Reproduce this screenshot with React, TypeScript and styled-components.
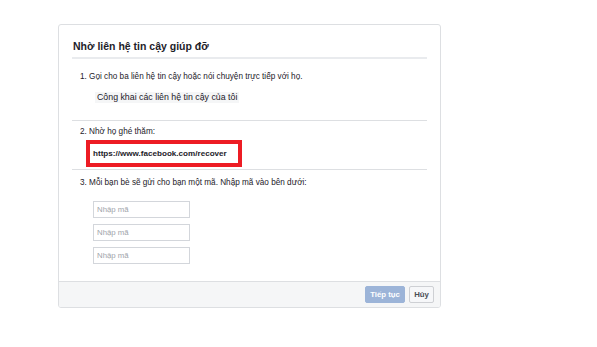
import React from 'react'
import styled, { createGlobalStyle } from 'styled-components'

const GlobalStyle = createGlobalStyle`
  html, body {
    margin: 0;
    padding: 0;
    background: #fff;
    font-family: "Liberation Sans", Arial, sans-serif;
    color: #1d2129;
  }
`

const Page = styled.div`
  width: 597px;
  height: 347px;
  padding: 24px 0 0 58px;
  box-sizing: border-box;
`

const Card = styled.div`
  width: 383px;
  height: 284px;
  box-sizing: border-box;
  border: 1px solid #dddfe2;
  border-radius: 3px;
  display: flex;
  flex-direction: column;
  overflow: hidden;
`

const Header = styled.div`
  margin: 0 13px;
  padding: 15px 0 5px 1px;
  border-bottom: 2px solid #e9ebee;
  font-size: 10.5px;
  font-weight: bold;
  line-height: 12px;
  white-space: nowrap;
`

const Section = styled.div<{ $top: number; $bottom: number; $last?: boolean }>`
  margin: 0 13px;
  padding: ${p => p.$top}px 0 ${p => p.$bottom}px 8px;
  border-bottom: ${p => (p.$last ? 'none' : '1px solid #dddfe2')};
  flex: ${p => (p.$last ? 1 : 'none')};
`

const StepText = styled.div`
  font-size: 8.2px;
  line-height: 12px;
  color: #1d2129;
  white-space: nowrap;
`

const GrayButton = styled.div`
  display: inline-block;
  margin: 9px 0 0 15px;
  padding: 0 2px;
  height: 11px;
  line-height: 11px;
  background: #f5f6f7;
  font-size: 8.8px;
  color: #1d2129;
  white-space: nowrap;
`

const Highlight = styled.div`
  width: 156px;
  height: 27px;
  box-sizing: border-box;
  margin: 2px 0 0 6px;
  border: 4px solid #ed1c24;
  padding: 0 0 0 3px;
  display: flex;
  align-items: center;
  font-size: 8.1px;
  font-weight: bold;
  color: #1d2129;
  white-space: nowrap;
`

const Inputs = styled.div`
  display: flex;
  flex-direction: column;
  gap: 6px;
  margin: 12px 0 0 13px;
`

const CodeInput = styled.input`
  width: 97px;
  height: 17px;
  box-sizing: border-box;
  margin: 0;
  border: 1px solid #d3d6db;
  padding: 0 3px;
  font-family: "Liberation Sans", Arial, sans-serif;
  font-size: 7.8px;
  outline: none;
  &::placeholder {
    color: #a0a4aa;
  }
`

const Footer = styled.div`
  height: 26px;
  box-sizing: border-box;
  border-top: 1px solid #dddfe2;
  background: #f5f6f7;
  display: flex;
  justify-content: flex-end;
  align-items: center;
  gap: 4px;
  padding: 0 6px 0 0;
`

const Button = styled.button<{ $primary?: boolean }>`
  height: 17px;
  box-sizing: border-box;
  margin: 0;
  padding: 0;
  border-radius: 2px;
  font-family: "Liberation Sans", Arial, sans-serif;
  font-size: 7.8px;
  font-weight: bold;
  line-height: 15px;
  white-space: nowrap;
  border: 1px solid ${p => (p.$primary ? '#9cb4d8' : '#ced0d4')};
  background: ${p => (p.$primary ? '#9cb4d8' : '#f6f7f9')};
  color: ${p => (p.$primary ? '#fff' : '#4b4f56')};
  width: ${p => (p.$primary ? '40px' : '25px')};
`

export default function App() {
  return (
    <Page>
      <GlobalStyle />
      <Card>
        <Header>Nhờ liên hệ tin cậy giúp đỡ</Header>
        <Section $top={12} $bottom={16}>
          <StepText>1. Gọi cho ba liên hệ tin cậy hoặc nói chuyện trực tiếp với họ.</StepText>
          <GrayButton>Công khai các liên hệ tin cậy của tôi</GrayButton>
        </Section>
        <Section $top={5} $bottom={2}>
          <StepText>2. Nhờ họ ghé thăm:</StepText>
          <Highlight>https://www.facebook.com/recover</Highlight>
        </Section>
        <Section $top={7} $bottom={0} $last>
          <StepText>3. Mỗi bạn bè sẽ gửi cho bạn một mã. Nhập mã vào bên dưới:</StepText>
          <Inputs>
            <CodeInput placeholder="Nhập mã" />
            <CodeInput placeholder="Nhập mã" />
            <CodeInput placeholder="Nhập mã" />
          </Inputs>
        </Section>
        <Footer>
          <Button $primary>Tiếp tục</Button>
          <Button>Hủy</Button>
        </Footer>
      </Card>
    </Page>
  )
}
